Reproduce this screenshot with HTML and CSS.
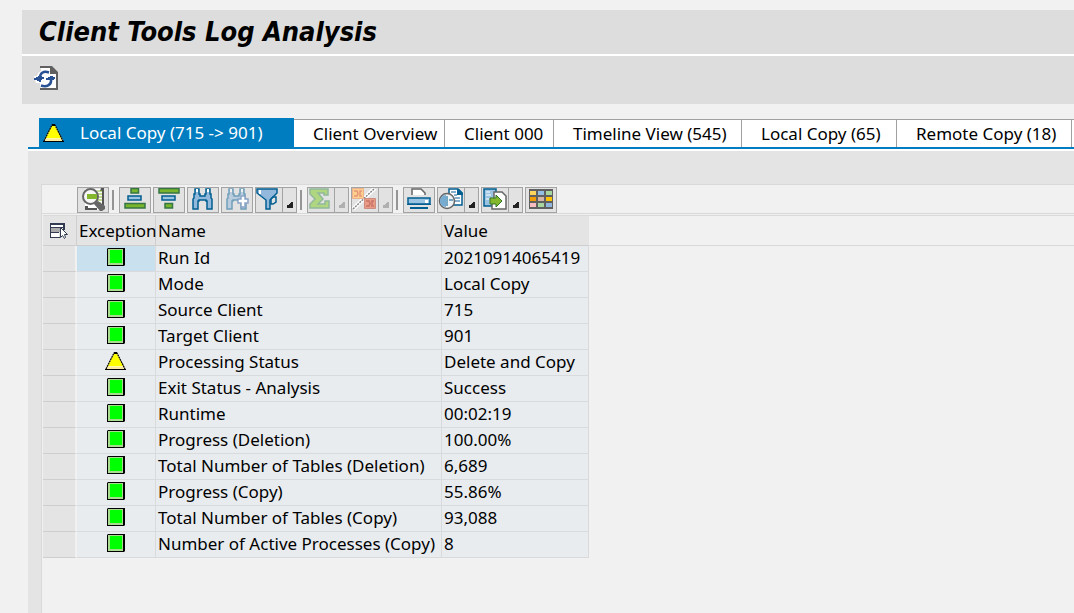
FILE: index.html
```html
<!DOCTYPE html>
<html lang="en">
<head>
<meta charset="utf-8">
<title>Client Tools Log Analysis</title>
<link rel="stylesheet" href="styles.css">
</head>
<body>
<svg class="defs" aria-hidden="true">
  <symbol id="ok" viewBox="0 0 18 18"><path fill="#000" d="M1 0h17v17l-1 1H0V1z"/><path fill="#a9dc91" d="M1 1h15v16H1z"/><path fill="#0f0" d="M3 2h12v13H3z"/></symbol>
  <symbol id="warn" viewBox="0 0 21 18"><path fill="#fff9a8" d="M9 1h3l8 15H1z"/><path fill="#ff0" d="M9 2h3l6 12H3z"/><path fill="#ffe9a0" d="M2 15h17v2H1z"/><path fill="none" stroke="#000" stroke-width="1.2" stroke-dasharray="2 .5" d="M1 17 9 1h3l8 16"/><path d="M0 17h21v1H0zM9 0h3v2H9z"/></symbol>
  <symbol id="corner" viewBox="0 0 13 24"><path d="M10 14v6H4v-3h2v-1h1v-1h1v-1z"/></symbol>
</svg>
<div class="page">
  <header class="title-bar"><h1>Client Tools Log Analysis</h1></header>
  <div class="app-bar">
    <button class="refresh" aria-label="Refresh">
      <svg width="26" height="26" viewBox="1 0 26 26"><path fill="#606060" d="M7 1h12l6 6v18H7v-2h16V9h-6V3H7z"/><path fill="#fff" d="M8 3h9v6h6v14H8z"/><path fill="#fff" d="M1 11h3c1-4 5-7 11-5l1 4h6v6h-3c-1 5-7 8-12 6v-4H3z"/><g fill="none" stroke="#285293" stroke-width="2.5"><path d="M16 7.500c-6-2-9 1-9 5"/><path d="M8 20.500c6 2 11-1 10-6"/></g><path fill="#285293" d="M1 13h2v-1h2v-1h4v1h2v2H9v1H8v2H6v-1H4v-1H1zM13 15v-2h2v-1h2v-1h3v1h2v2h-1v1z"/></svg>
    </button>
  </div>
  <nav class="tabs">
    <button class="tab active"><svg width="21" height="18"><use href="#warn"/></svg>Local Copy (715 -&gt; 901)</button>
    <button class="tab overview">Client Overview</button>
    <button class="tab client">Client 000</button>
    <button class="tab timeline">Timeline View (545)</button>
    <button class="tab local">Local Copy (65)</button>
    <button class="tab remote">Remote Copy (18)</button>
    <span class="tab-rest"></span>
  </nav>
  <main class="panel">
    <section class="grid-box">
      <div class="toolbar">
        <button class="tool" aria-label="Details"><svg viewBox="1 1 30 24"><path fill="#fff" d="M8 2h18v21H8z"/><path fill="#555" d="M24 1h3v17h-2V4h-2zM8 19h3v2h9v2H8z"/><path stroke="#84b82c" stroke-width="1" d="M20 4h5M20 7h5M20 10h5M20 13h5M20 16h4"/><path fill="#666" d="m18 15 3-1 7 5v3l-3 2h-2l-6-7z"/><circle cx="13.500" cy="9.500" r="7.500" fill="#f7f7f7" stroke="#666" stroke-width="2"/><path fill="#84b82c" d="M10 7h10v5H10z"/></svg></button>
        <span class="sep"></span>
        <button class="tool" aria-label="Sort ascending"><svg viewBox="1 1 30 24"><g stroke-width="1.500"><path fill="#79b52c" stroke="#357544" d="M12 1.500h7.500v4.500H12z"/><path fill="#9bc4e2" stroke="#005e91" d="M9 9h13v4H9z"/><path fill="#79b52c" stroke="#357544" d="M6 16.500h20V21H6z"/></g></svg></button>
        <button class="tool" aria-label="Sort descending"><svg viewBox="1 1 30 24"><g stroke-width="1.500"><path fill="#79b52c" stroke="#357544" d="M6 1.500h20V6H6z"/><path fill="#9bc4e2" stroke="#005e91" d="M9 9h13v4H9z"/><path fill="#79b52c" stroke="#357544" d="M12 16.500h7.500V21H12z"/></g></svg></button>
        <button class="tool" aria-label="Find"><svg viewBox="1 1 30 24"><path id="bino" fill="#92b9dc" stroke="#005e91" stroke-width="1.500" d="M8 2h4v5h1v2h5V7h1V2h4v5h1v4l1 1v10h-5v-8h-1v-1h-7v1h-1v8H6V12l1-1V7h1z"/><path fill="#fff" d="M9 2h2v3H9zM20 2h2v3h-2z"/></svg></button>
        <button class="tool" aria-label="Find next"><svg viewBox="1 1 30 24"><g opacity=".5"><use href="#bino"/><path fill="#fff" d="M9 2h2v3H9zM20 2h2v3h-2z"/></g><path fill="#fff" stroke="#89a4c5" stroke-width="1.500" d="M20 9h4v3h3v4h-3v4h-4v-4h-3v-4h3z"/></svg></button>
        <div class="split">
          <button class="tool" aria-label="Filter"><svg viewBox="1 1 26 24"><path fill="#92b9dc" stroke="#005e91" stroke-width="1.500" d="M2 2h20v4l-7 7v9h-4v-9L2 6z"/><path fill="#fff" d="M4 3h2v4H4z"/><path fill="none" stroke="#005e91" stroke-width="1.500" d="M16 12l2-2h3v5l-3 2h-2z"/></svg></button>
          <button class="drop" aria-label="Filter options"><svg><use href="#corner"/></svg></button>
        </div>
        <span class="sep"></span>
        <div class="split disabled">
          <button class="tool" aria-label="Total"><svg viewBox="1 1 26 24"><path fill="#b0d680" stroke="#91b99a" stroke-width="1.500" d="M3 2h18v6h-4V6h-6l5 6-5 5h7v-3h4v7H3v-4l5-5-5-5z"/></svg></button>
          <button class="drop" aria-label="Total options"><svg><use href="#corner"/></svg></button>
        </div>
        <div class="split disabled">
          <button class="tool" aria-label="Subtotals"><svg viewBox="1 1 26 24"><path stroke="#fff" stroke-width="4" d="M2 22 24 1"/><path stroke="#888" stroke-width="1.500" stroke-dasharray="2 1" d="M2 22 24 1"/><path fill="#ffd08b" stroke="#edb18e" d="M1.500 1.500h11v10h-11z"/><path fill="#e99b83" stroke="#cc8c82" d="M13.500 11.500h11v10h-11z"/><path fill="none" stroke="#e5957b" stroke-width="1.500" d="M3 4h3l1 2.500L6 9H3M11 4H9v5h2"/><path fill="none" stroke="#c9746a" stroke-width="1.500" d="M15 14h3l1 2.500-1 2.500h-3M23 14h-2v5h2"/></svg></button>
          <button class="drop" aria-label="Subtotal options"><svg><use href="#corner"/></svg></button>
        </div>
        <span class="sep"></span>
        <button class="tool" aria-label="Print"><svg viewBox="1 1 30 24"><path fill="#fff" stroke="#666" stroke-width="1.500" d="M9 8V2h9l4 4v2"/><path fill="#9bc4e2" stroke="#005e91" stroke-width="1.500" d="M5 11h22v6H5z"/><path fill="#fff" d="M22 13h3v3h-3z"/><path fill="#005e91" d="M4 17h24v1H4zM7 20h18v2H7z"/></svg></button>
        <div class="split">
          <button class="tool" aria-label="Views"><svg viewBox="1 1 26 24"><path fill="#fff" stroke="#005e91" stroke-width="1.500" d="M12 2h9l4 4v12H12z"/><path fill="#005e91" d="M20 2h2l4 4v2h-6z"/><path fill="none" stroke="#5d93bd" stroke-width="1.500" d="M14 5h5M17 8h3M18 11h5M18 14h5"/><circle cx="10" cy="14" r="7.500" fill="#edf3f7" stroke="#666" stroke-width="1.500"/><path fill="#77acd2" d="M9 8v12C1 20 1 8 9 8z"/><path stroke="#005e91" d="M10 9v10M12 13h4"/></svg></button>
          <button class="drop" aria-label="View options"><svg><use href="#corner"/></svg></button>
        </div>
        <div class="split">
          <button class="tool" aria-label="Export"><svg viewBox="1 1 26 24"><path fill="#9bc4e2" stroke="#005e91" stroke-width="1.500" d="M3 2h12v17H3z"/><path stroke="#fff" d="M5 5h4M5 8h5M5 12h3"/><path fill="#fff" stroke="#666" stroke-width="1.500" d="M13 5h8l4 4v13H11v-7h2z"/><path fill="#84b82c" stroke="#347428" d="M9 11h6V8l6 6-6 6v-3H9z"/></svg></button>
          <button class="drop" aria-label="Export options"><svg><use href="#corner"/></svg></button>
        </div>
        <button class="tool" aria-label="Choose layout"><svg viewBox="1 1 30 24"><path fill="#606060" d="M4 2h24v20H4z"/><path fill="#ffd45c" d="M5 4h6v4H5z"/><path fill="#91bee2" d="M13 4h6v4h-6z"/><path fill="#a8d69e" d="M21 4h6v4h-6zM13 16h6v4h-6z"/><path fill="#f49b00" d="M5 10h6v4H5z"/><path fill="#d4b6a6" d="M13 10h6v4h-6z"/><path fill="#ffc400" d="M21 10h6v4h-6z"/><path fill="#f9bdc0" d="M5 16h6v4H5z"/><path fill="#91b8dc" d="M21 16h6v4h-6z"/></svg></button>
      </div>
      <div class="table-area">
      <table>
        <colgroup><col class="c-select"><col class="c-status"><col class="c-name"><col class="c-value"></colgroup>
        <thead><tr><th><button class="select-all" aria-label="Select all"><svg width="20" height="18" viewBox="0 0 20 18"><path fill="#333b52" d="M1 1h15v2H1zM1 5h15v1H1zM1 1h1v15H1zM14 1h2v7h-2zM1 10h9v1H1zM1 15h10v1H1z"/><path fill="#fff" d="M2 3h12v2H2zM2 11h8v4H2z"/><path fill="#aaa" d="M2 6h9v4H2z"/><path fill="#fff" stroke="#333b52" d="M11.500 5.500v10l2-2 2 3 1-1-1-3h3z"/></svg></button></th><th>Exception</th><th>Name</th><th>Value</th></tr></thead>
        <tbody>
          <tr><td></td><td class="focus"><svg class="ok"><use href="#ok"/></svg></td><td>Run Id</td><td>20210914065419</td></tr>
          <tr><td></td><td><svg class="ok"><use href="#ok"/></svg></td><td>Mode</td><td>Local Copy</td></tr>
          <tr><td></td><td><svg class="ok"><use href="#ok"/></svg></td><td>Source Client</td><td>715</td></tr>
          <tr><td></td><td><svg class="ok"><use href="#ok"/></svg></td><td>Target Client</td><td>901</td></tr>
          <tr><td></td><td><svg class="warn"><use href="#warn"/></svg></td><td>Processing Status</td><td>Delete and Copy</td></tr>
          <tr><td></td><td><svg class="ok"><use href="#ok"/></svg></td><td>Exit Status - Analysis</td><td>Success</td></tr>
          <tr><td></td><td><svg class="ok"><use href="#ok"/></svg></td><td>Runtime</td><td>00:02:19</td></tr>
          <tr><td></td><td><svg class="ok"><use href="#ok"/></svg></td><td>Progress (Deletion)</td><td>100.00%</td></tr>
          <tr><td></td><td><svg class="ok"><use href="#ok"/></svg></td><td>Total Number of Tables (Deletion)</td><td>6,689</td></tr>
          <tr><td></td><td><svg class="ok"><use href="#ok"/></svg></td><td>Progress (Copy)</td><td>55.86%</td></tr>
          <tr><td></td><td><svg class="ok"><use href="#ok"/></svg></td><td>Total Number of Tables (Copy)</td><td>93,088</td></tr>
          <tr><td></td><td><svg class="ok"><use href="#ok"/></svg></td><td>Number of Active Processes (Copy)</td><td>8</td></tr>
        </tbody>
      </table>
      <div class="header-rest"></div>
      </div>
    </section>
  </main>
</div>
</body>
</html>
```
FILE: styles.css
```css
* { box-sizing: border-box; }
body {
  margin: 0;
  background: #f1f1f1;
  color: #000;
  font: 17px/24px Tahoma, "Noto Sans", "DejaVu Sans Condensed", sans-serif;
}
button { font: inherit; color: inherit; border: 0; padding: 0; background: none; }
svg { display: block; flex: none; }
.defs { position: absolute; width: 0; height: 0; }
.page { display: flex; flex-direction: column; min-height: 100vh; padding-top: 10px; overflow: hidden; }
.title-bar {
  display: flex;
  align-items: center;
  height: 46px;
  margin-left: 22px;
  padding-left: 17px;
  background: #dddddd;
  border-bottom: 2px solid #fff;
}
h1 { margin: 0; font: italic bold 27px/40px Tahoma, "DejaVu Sans Condensed", sans-serif; white-space: nowrap; }
.app-bar { height: 48px; margin-left: 22px; padding: 9px 12px; background: #dddddd; }
.refresh { display: block; }

.tabs {
  display: flex;
  align-items: flex-end;
  height: 31px;
  margin: 14px 0 0 28px;
  padding-left: 11px;
  border-bottom: 2px solid #007cc0;
}
.tab {
  flex: none;
  height: 28px;
  padding: 0 0 0 19px;
  background: #fff;
  border-top: 1px solid #a0a0a0;
  border-right: 1px solid #a0a0a0;
  text-align: left;
  white-space: nowrap;
}
.tab.active {
  display: flex;
  align-items: center;
  gap: 16px;
  width: 255px;
  height: 29px;
  padding-left: 4px;
  background: #007cc0;
  border: 0;
  color: #fff;
}
.overview { width: 151px; }
.client { width: 109px; }
.timeline { width: 188px; }
.local { width: 155px; }
.remote { width: 175px; }
.tab-rest { flex: 1; height: 28px; background: #fff; border-top: 1px solid #a0a0a0; }

.panel {
  display: flex;
  flex: 1;
  margin-left: 28px;
  padding: 33px 0 0 13px;
  background: #e4e4e4;
  border-top: 2px solid #fff;
}
.grid-box { flex: 1; min-width: 0; background: #f1f1f1; border: solid #d9d9d9; border-width: 1px 0 0 1px; }
.toolbar {
  display: flex;
  gap: 2px;
  height: 29px;
  padding: 2px 0 0 35px;
  border-bottom: 1px solid #d9d9d9;
}
.tool { width: 32px; height: 26px; background: #e2e2e2; border: 1px solid #a3a3a3; flex: none; }
.tool svg { width: 30px; height: 24px; }
.split { display: flex; width: 42px; }
.split .tool { width: 28px; }
.split .tool svg { width: 26px; }
.drop { width: 14px; height: 26px; background: #e2e2e2; border: solid #a3a3a3; border-width: 1px 1px 1px 0; }
.drop svg { width: 13px; height: 24px; fill: #222; }
.disabled .drop svg { fill: #b0b0b0; }
.sep { width: 2px; height: 20px; margin: 3px 3px 0 1px; background: #959595; flex: none; }

.table-area { display: flex; padding: 1px 0 0 1px; }
table { border-collapse: separate; border-spacing: 0; table-layout: fixed; width: 546px; flex: none; }
.c-select { width: 34px; }
.c-status { width: 79px; }
.c-name { width: 286px; }
.c-value { width: 147px; }
th, td { padding: 0 2px; text-align: left; font-weight: normal; white-space: nowrap; border: solid #d9dadb; border-width: 0 1px 1px 0; }
th { height: 31px; background: #e4e4e4; border-color: #cecece; border-top: 1px solid #d9d9d9; }
th:last-child { border-right-color: #e4e4e4; }
td { height: 26px; padding-bottom: 2px; line-height: 23px; background: #e8ecef; }
td:first-child { background: #e4e4e4; border-color: #cecece; border-right: 2px solid #f1f1f1; }
td:nth-child(2) { padding: 0 2px 4px 1px; }
td:nth-child(2) svg { margin: 0 auto; }
td.focus { background: #c9e1ee; }
.ok { width: 18px; height: 18px; }
.warn { width: 21px; height: 18px; }
.select-all { display: block; margin-left: 4px; }
.header-rest { flex: 1; height: 31px; border: solid #d9d9d9; border-width: 1px 0; }
```
